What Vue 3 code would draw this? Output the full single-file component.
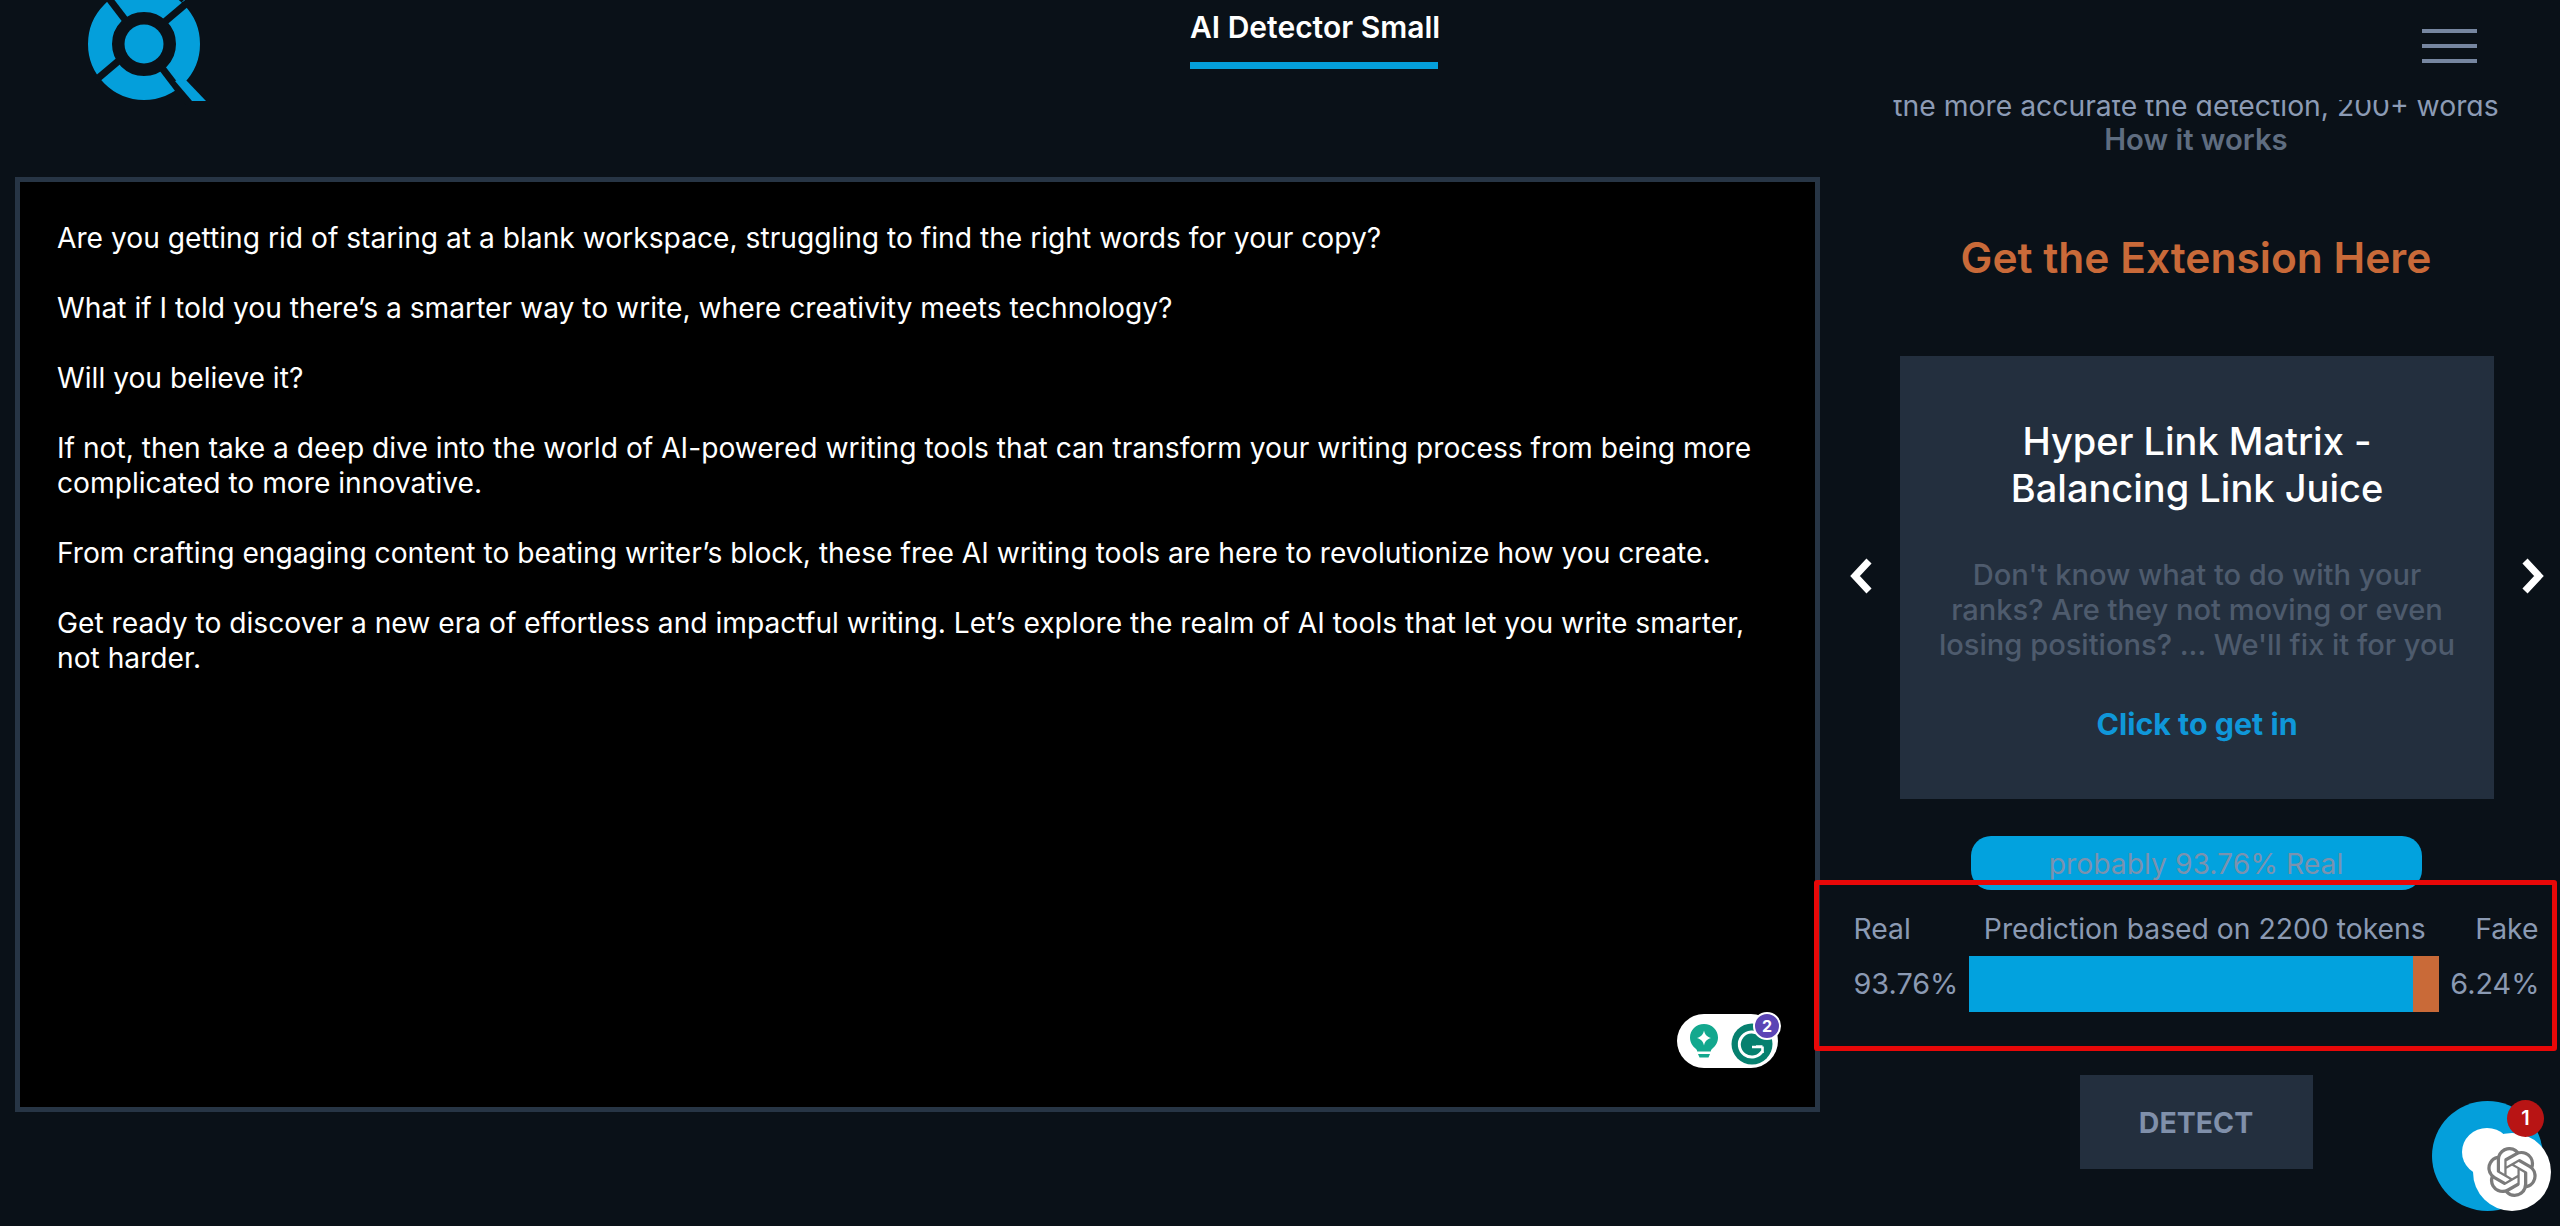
<script setup>
const paragraphs = [
  "Are you getting rid of staring at a blank workspace, struggling to find the right words for your copy?",
  "What if I told you there’s a smarter way to write, where creativity meets technology?",
  "Will you believe it?",
  "If not, then take a deep dive into the world of AI-powered writing tools that can transform your writing process from being more complicated to more innovative.",
  "From crafting engaging content to beating writer’s block, these free AI writing tools are here to revolutionize how you create.",
  "Get ready to discover a new era of effortless and impactful writing. Let’s explore the realm of AI tools that let you write smarter, not harder."
];
const openai = "M22.2819 9.8211a5.9847 5.9847 0 0 0-.5157-4.9108 6.0462 6.0462 0 0 0-6.5098-2.9A6.0651 6.0651 0 0 0 4.9807 4.1818a5.9847 5.9847 0 0 0-3.9977 2.9 6.0462 6.0462 0 0 0 .7427 7.0966 5.98 5.98 0 0 0 .511 4.9107 6.051 6.051 0 0 0 6.5146 2.9001A5.9847 5.9847 0 0 0 13.2599 24a6.0557 6.0557 0 0 0 5.7718-4.2058 5.9894 5.9894 0 0 0 3.9977-2.9001 6.0557 6.0557 0 0 0-.7475-7.0729zm-9.022 12.6081a4.4755 4.4755 0 0 1-2.8764-1.0408l.1419-.0804 4.7783-2.7582a.7948.7948 0 0 0 .3927-.6813v-6.7369l2.02 1.1686a.071.071 0 0 1 .038.052v5.5826a4.504 4.504 0 0 1-4.4945 4.4944zm-9.6607-4.1254a4.4708 4.4708 0 0 1-.5346-3.0137l.142.0852 4.783 2.7582a.7712.7712 0 0 0 .7806 0l5.8428-3.3685v2.3324a.0804.0804 0 0 1-.0332.0615L9.74 19.9502a4.4992 4.4992 0 0 1-6.1408-1.6464zM2.3408 7.8956a4.485 4.485 0 0 1 2.3655-1.9728V11.6a.7664.7664 0 0 0 .3879.6765l5.8144 3.3543-2.0201 1.1685a.0757.0757 0 0 1-.071 0l-4.8303-2.7865A4.504 4.504 0 0 1 2.3408 7.872zm16.5963 3.8558L13.1038 8.364 15.1192 7.2a.0757.0757 0 0 1 .071 0l4.8303 2.7913a4.4944 4.4944 0 0 1-.6765 8.1042v-5.6772a.79.79 0 0 0-.407-.667zm2.0107-3.0231l-.142-.0852-4.7735-2.7818a.7759.7759 0 0 0-.7854 0L9.409 9.2297V6.8974a.0662.0662 0 0 1 .0284-.0615l4.8303-2.7866a4.4992 4.4992 0 0 1 6.6802 4.66zM8.3065 12.863l-2.02-1.1638a.0804.0804 0 0 1-.038-.0567V6.0742a4.4992 4.4992 0 0 1 7.3757-3.4537l-.142.0805L8.704 5.459a.7948.7948 0 0 0-.3927.6813zm1.0976-2.3654l2.602-1.4998 2.6069 1.4998v2.9994l-2.5974 1.4997-2.6067-1.4997Z";
</script>

<template>
  <div class="page">
    <header class="header">
      <svg class="logo" viewBox="0 0 170 120" width="170" height="120" aria-label="logo">
        <circle cx="84" cy="44" r="44" fill="none" stroke="#049fdb" stroke-width="24" />
        <polygon points="122,2 130,-6 135,-6 127,2" fill="#049fdb" />
        <line x1="47" y1="-4" x2="128" y2="102" stroke="#0a1118" stroke-width="7" />
        <line x1="36" y1="80" x2="140" y2="-8" stroke="#0a1118" stroke-width="7" />
        <polygon points="124,78 146,101 132,101 115,81" fill="#049fdb" />
        <circle cx="84" cy="44" r="19.500" fill="#049fdb" />
      </svg>
      <nav class="nav"><span class="nav-item">AI Detector Small</span></nav>
      <div class="menu"><i></i><i></i><i></i></div>
    </header>

    <main class="main">
      <section class="editor">
        <p v-for="(p, i) in paragraphs" :key="i">{{ p }}</p>
        <div class="grammarly">
          <svg width="28" height="34" viewBox="0 0 28 34">
            <path d="M14 0C6 0 0 6 0 13.5c0 5 2.600 8.500 5.500 11 1.200 1 1.700 2 1.700 3h13.600c0-1 .5-2 1.700-3 2.900-2.500 5.500-6 5.500-11C28 6 22 0 14 0z" fill="#13a88e" />
            <path d="M8 30h12l-1.500 3.500h-9z" fill="#13a88e" />
            <path d="M14 6.500c1 4 2.500 6 7 7.500-4.500 1.500-6 3.500-7 7.500-1-4-2.500-6-7-7.500 4.500-1.500 6-3.500 7-7.500z" fill="#fff" />
          </svg>
          <svg class="g-mark" width="42" height="42" viewBox="0 0 42 42">
            <circle cx="21" cy="21" r="20.500" fill="#06806f" />
            <path d="M29.500 12.500A12.500 12.500 0 1 0 31.500 28" fill="none" stroke="#fff" stroke-width="3" />
            <path d="M21 24h10M31.500 23.500v6.500M31.500 23.500h-6.500" fill="none" stroke="#fff" stroke-width="2.600" />
          </svg>
          <span class="g-badge">2</span>
        </div>
      </section>

      <aside class="side">
        <div class="scrolled">
          <div class="hint">the more accurate the detection, 200+ words</div>
          <div class="how">How it works</div>
        </div>

        <h2 class="ext-title">Get the Extension Here</h2>

        <div class="carousel">
          <svg class="arrow" width="26" height="36" viewBox="0 0 26 36">
            <path d="M21 3 7 18l14 15" fill="none" stroke="#fff" stroke-width="7" />
          </svg>
          <div class="card">
            <h3>Hyper Link Matrix -<br />Balancing Link Juice</h3>
            <p class="card-desc">Don't know what to do with your ranks? Are they not moving or even losing positions? ... We'll fix it for you</p>
            <a class="card-link">Click to get in</a>
          </div>
          <svg class="arrow" width="26" height="36" viewBox="0 0 26 36">
            <path d="M5 3l14 15L5 33" fill="none" stroke="#fff" stroke-width="7" />
          </svg>
        </div>

        <div class="pill">probably 93.76% Real</div>

        <div class="result">
          <div class="labels">
            <span>Real</span>
            <span class="pred">Prediction based on 2200 tokens</span>
            <span class="fake">Fake</span>
          </div>
          <div class="values">
            <span>93.76%</span>
            <div class="bar">
              <div class="bar-real" :style="{ width: '94.4%' }"></div>
              <div class="bar-fake"></div>
            </div>
            <span>6.24%</span>
          </div>
        </div>

        <button class="detect">DETECT</button>
      </aside>
    </main>

    <div class="red-mark"></div>

    <div class="chat">
      <div class="chat-blue"></div>
      <div class="chat-white-a"></div>
      <div class="chat-white-b">
        <svg width="50" height="50" viewBox="0 0 24 24"><path :d="openai" fill="#7b7b7b" /></svg>
      </div>
      <span class="chat-badge">1</span>
    </div>
  </div>
</template>

<style>
html, body { margin: 0; background: #0a1118; }
</style>

<style scoped>
.page {
  position: relative;
  width: 2560px;
  height: 1226px;
  overflow: hidden;
  background: #0a1118;
  font-family: Inter, "Liberation Sans", sans-serif;
  font-size: 28.3px;
  color: #fff;
}
.header {
  display: flex;
  align-items: flex-start;
  height: 100px;
  padding-left: 60px;
  padding-right: 83px;
  box-sizing: border-box;
}
.logo { flex: none; }
.nav { margin-left: 960px; }
.nav-item {
  display: block;
  width: 248px;
  height: 69px;
  box-sizing: border-box;
  border-bottom: 7px solid #049fdb;
  padding-top: 10px;
  line-height: 34px;
  font-size: 30px;
  font-weight: 600;
  white-space: nowrap;
  text-align: center;
}
.menu {
  margin-left: auto;
  margin-top: 29px;
  display: flex;
  flex-direction: column;
  gap: 11px;
  width: 55px;
}
.menu i { display: block; height: 4px; background: #7686a0; }
.main { display: flex; align-items: flex-start; }
.editor {
  position: relative;
  flex: none;
  width: 1805px;
  height: 935px;
  box-sizing: border-box;
  margin-left: 15px;
  margin-top: 77px;
  padding: 39px 60px 0 37px;
  background: #000;
  border: 5px solid #273545;
  font-size: 28.2px;
  line-height: 35px;
}
.editor p { margin: 0 0 35px; }
.grammarly {
  position: absolute;
  left: 1657px;
  top: 832px;
  width: 101px;
  height: 54px;
  border-radius: 27px;
  background: #fff;
  box-sizing: border-box;
  display: flex;
  align-items: center;
  padding-left: 13px;
  gap: 13px;
}
.g-mark { margin-top: 6px; flex: none; }
.g-badge {
  position: absolute;
  right: -3px;
  top: -2px;
  width: 24px;
  height: 24px;
  border-radius: 50%;
  border: 2px solid #fff;
  background: #5b45b5;
  font-size: 16px;
  font-weight: 700;
  line-height: 24px;
  text-align: center;
}
.side {
  flex: none;
  width: 728px;
  margin-left: 12px;
  display: flex;
  flex-direction: column;
  align-items: center;
  overflow: hidden;
}
.scrolled { line-height: 32px; margin-top: -10px; text-align: center; white-space: nowrap; }
.hint { color: #8c9bb5; }
.how { color: #5f6d80; font-weight: 600; font-size: 29.3px; margin-top: 2px; }
.ext-title {
  margin: 78px 0 0;
  font-size: 42.5px;
  line-height: 48px;
  font-weight: 600;
  color: #c96a39;
}
.carousel { margin-top: 74px; margin-left: 2px; display: flex; align-items: center; gap: 26px; }
.arrow { flex: none; margin-bottom: 3px; }
.card {
  width: 594px;
  height: 443px;
  box-sizing: border-box;
  padding: 62px 30px 0;
  background: #232f3e;
  text-align: center;
}
.card h3 { margin: 0; font-size: 38px; line-height: 47px; font-weight: 500; }
.card-desc { margin: 45px 0 0; font-size: 29.1px; line-height: 35px; font-weight: 500; color: #4e5b6d; }
.card-link { display: block; margin-top: 44px; font-size: 30.4px; line-height: 36px; font-weight: 700; color: #0f97d9; }
.pill {
  margin-top: 37px;
  width: 451px;
  height: 54px;
  box-sizing: border-box;
  padding-top: 10px;
  border-radius: 20px;
  background: #02a2de;
  color: #7b92ae;
  line-height: 36px;
  text-align: center;
}
.result { margin-top: 21px; width: 686px; margin-left: 1px; color: #8b9ab3; line-height: 36px; }
.labels { display: flex; }
.pred { margin-left: 73px; white-space: nowrap; }
.fake { margin-left: auto; margin-right: 1px; }
.values { display: flex; align-items: center; gap: 11px; margin-top: 9px; font-size: 28.8px; }
.bar { flex: 1; height: 56px; display: flex; }
.bar-real { background: #02a2de; }
.bar-fake { flex: 1; background: #c96a38; }
.detect {
  margin-top: 63px;
  width: 233px;
  height: 94px;
  border: 0;
  background: #232f3e;
  color: #8090aa;
  font: 700 28.5px Inter, "Liberation Sans", sans-serif;
}
.red-mark {
  position: absolute;
  left: 1814px;
  top: 880px;
  width: 743px;
  height: 171px;
  box-sizing: border-box;
  border: 5px solid #e80808;
  border-radius: 3px;
  pointer-events: none;
}
.chat { position: absolute; left: 2432px; top: 1101px; width: 120px; height: 110px; }
.chat-blue { position: absolute; left: 0; top: 0; width: 111px; height: 110px; border-radius: 50%; background: #049fdb; }
.chat-white-a { position: absolute; left: 30px; top: 27px; width: 50px; height: 48px; border-radius: 50%; background: #fff; }
.chat-white-b {
  position: absolute;
  left: 41px;
  top: 32px;
  width: 78px;
  height: 78px;
  border-radius: 50%;
  background: #fff;
  display: flex;
  align-items: center;
  justify-content: center;
}
.chat-badge {
  position: absolute;
  left: 75px;
  top: -1px;
  width: 37px;
  height: 37px;
  border-radius: 50%;
  background: #b81414;
  font-size: 20px;
  font-weight: 600;
  line-height: 37px;
  text-align: center;
}
</style>
